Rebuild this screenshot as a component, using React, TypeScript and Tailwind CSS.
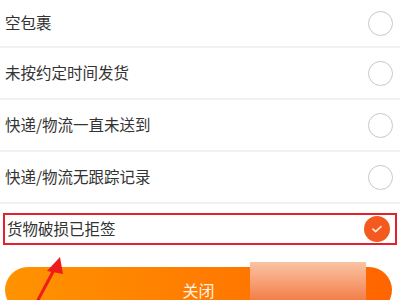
const OPTIONS = ['空包裹', '未按约定时间发货', '快递/物流一直未送到', '快递/物流无跟踪记录'];

function Radio() {
  return <span className="block h-[25px] w-[25px] rounded-full border-[1.5px] border-[#c8c8c8]" />;
}

function Checked() {
  return (
    <span className="flex h-[26px] w-[26px] items-center justify-center rounded-full bg-[#f4591d]">
      <svg width="14" height="14" viewBox="0 0 14 14" fill="none">
        <path d="M3 7.2l2.6 2.4L11 4.6" stroke="#fde3d6" strokeWidth="1.8" strokeLinecap="round" strokeLinejoin="round" />
      </svg>
    </span>
  );
}

export default function App() {
  return (
    <div
      className="relative h-[300px] w-[400px] overflow-hidden bg-white text-[#333]"
      style={{ fontFamily: '"Noto Sans CJK SC", "Noto Sans", sans-serif' }}
    >
      {OPTIONS.map((label, i) => (
        <div
          key={label}
          className={`flex items-center justify-between pl-[5px] pr-[7px] ${
            i === 0 ? 'h-[46px]' : 'h-[52px] border-t-2 border-[#f1f1f1]'
          }`}
        >
          <span className="text-[15.5px] leading-none">{label}</span>
          <Radio />
        </div>
      ))}

      <div className="h-[65px] border-t-2 border-[#f1f1f1] px-[3px] pt-[9px]">
        <div className="flex h-[32px] items-center justify-between border-2 border-[#e3202c] pl-[2px] pr-[5px]">
          <span className="text-[15.5px] leading-none">货物破损已拒签</span>
          <Checked />
        </div>
      </div>

      <div className="mx-[5px] mr-[8px] flex h-[46px] items-center justify-center rounded-full bg-gradient-to-r from-[#ff9300] to-[#ff6400]">
        <span className="text-[16px] text-[#fff1e4]">关闭</span>
      </div>

      <div className="absolute left-[250px] top-[262px] h-[40px] w-[116px] bg-gradient-to-b from-[#f9c3a4] to-[#f27a42]" />

      <svg className="absolute left-0 top-0" width="400" height="300" viewBox="0 0 400 300">
        <path d="M38 300 L55 268" stroke="#ee1c1c" strokeWidth="3" strokeLinecap="round" />
        <path d="M60 257 L47 271 L63 274 Z" fill="#ee1c1c" />
      </svg>
    </div>
  );
}
